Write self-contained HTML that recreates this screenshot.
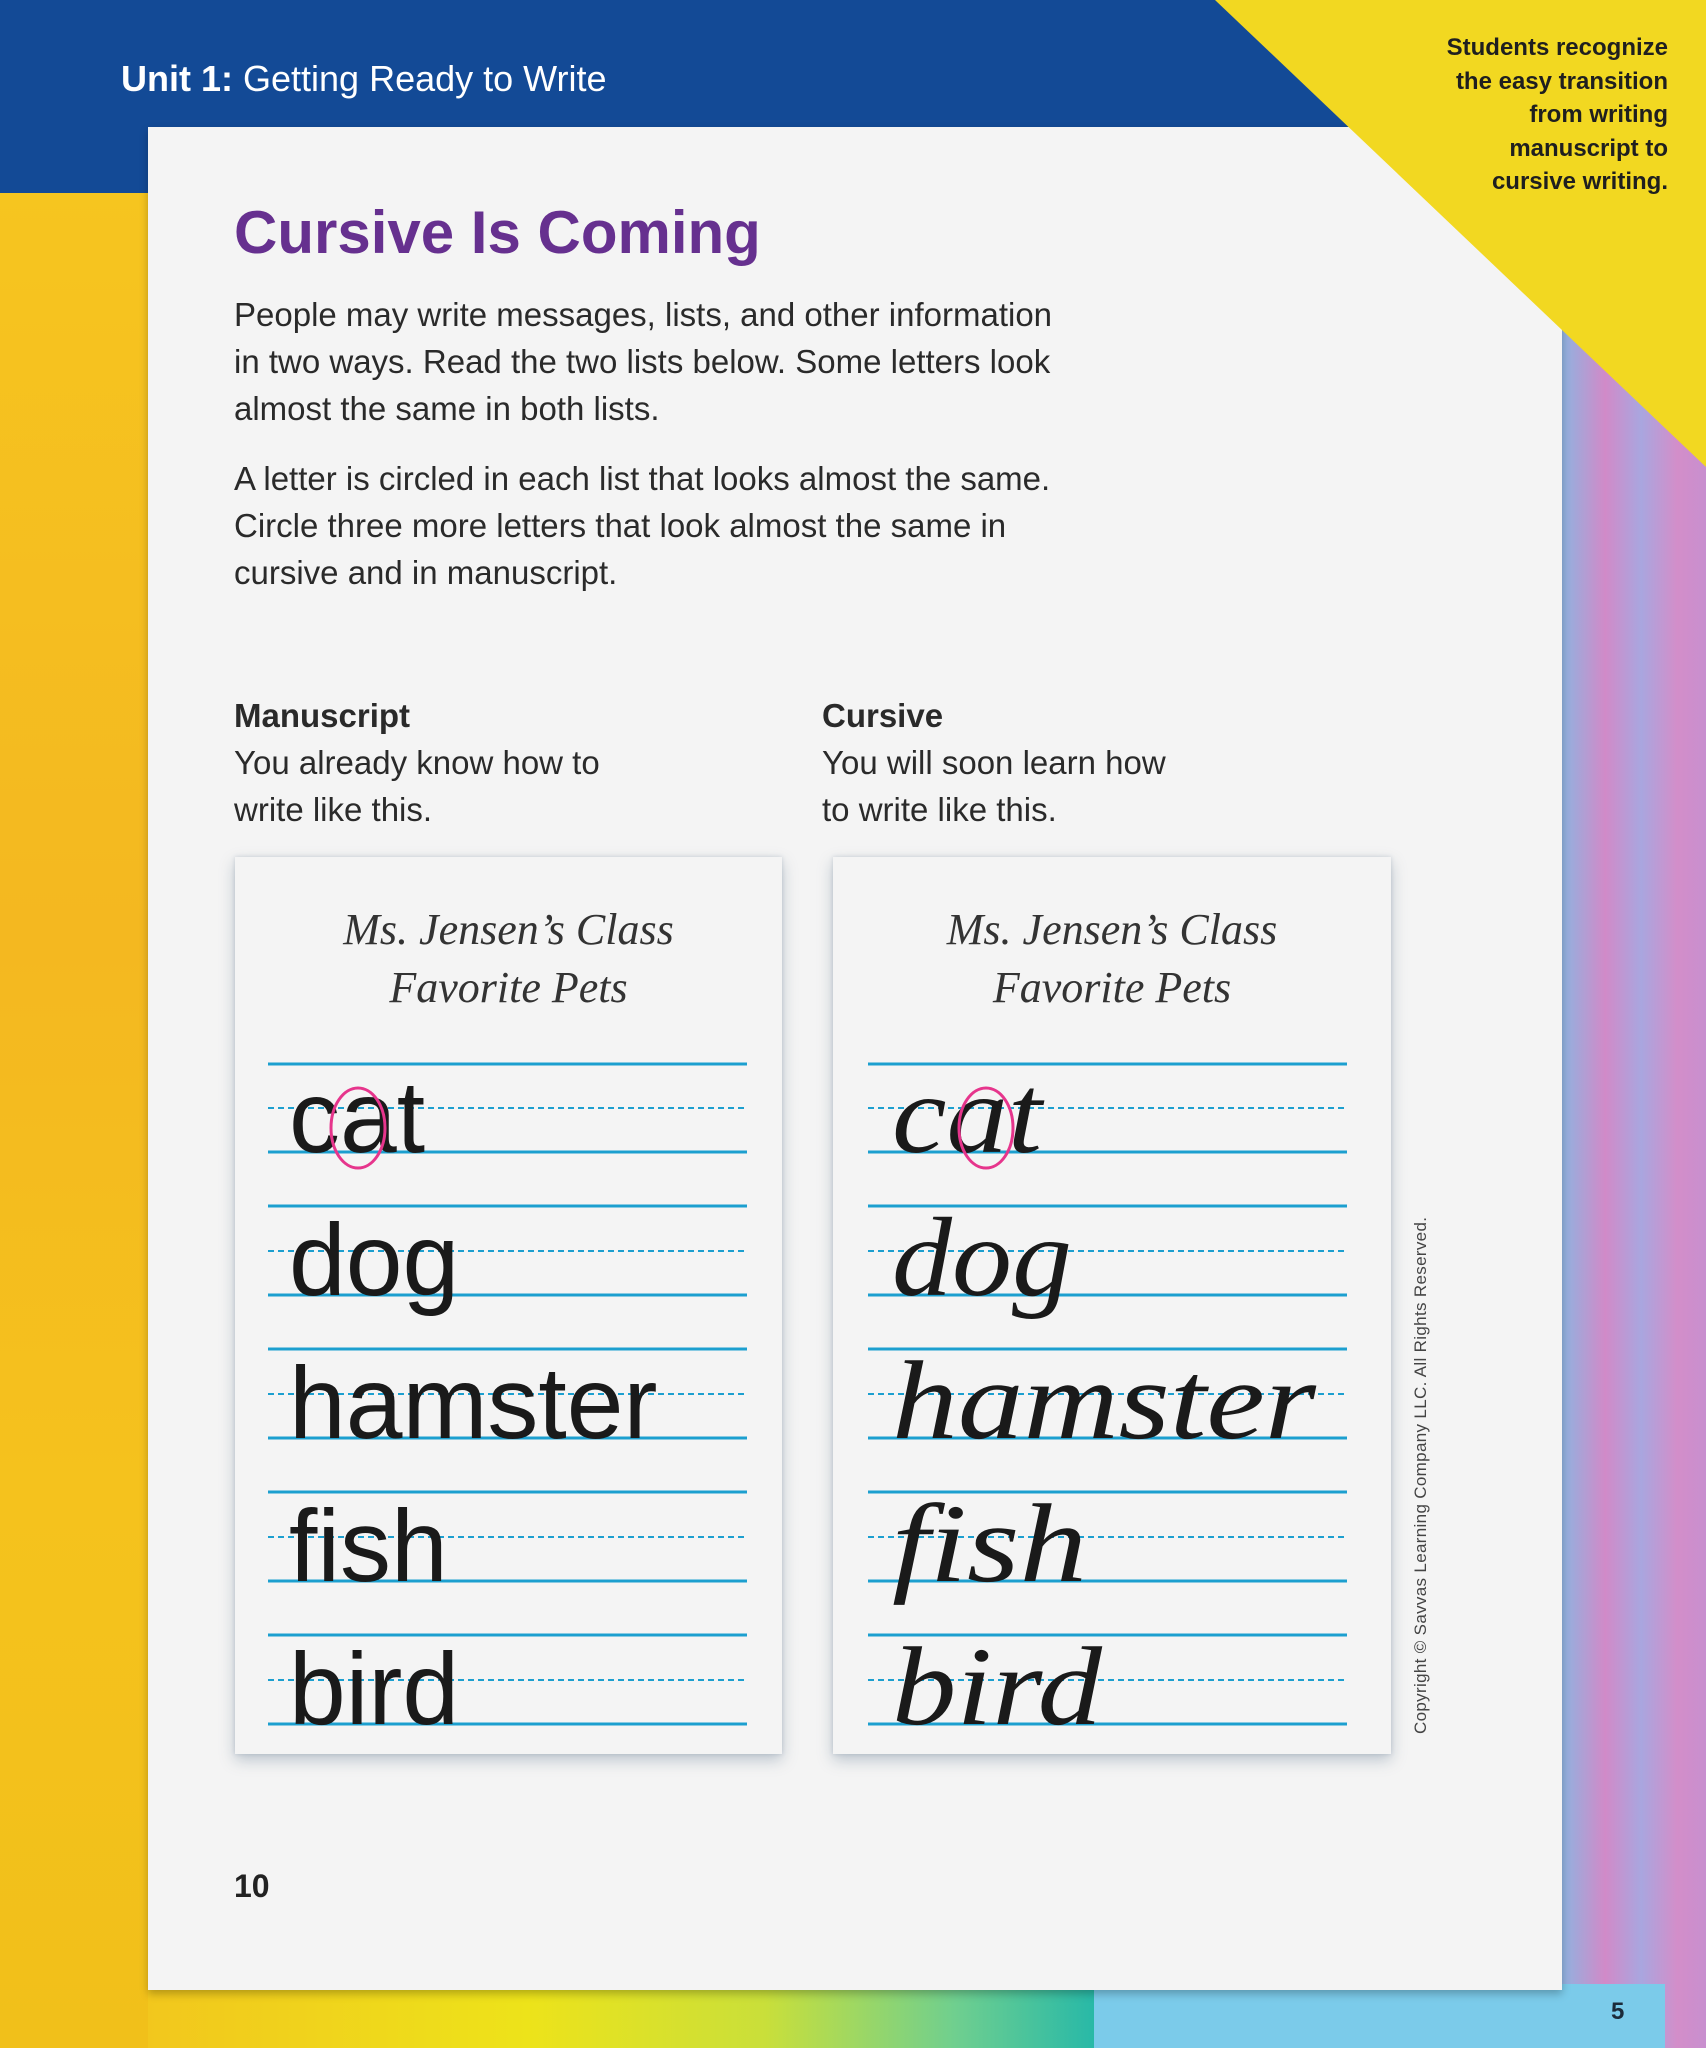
<!DOCTYPE html>
<html><head><meta charset="utf-8">
<style>
*{margin:0;padding:0;box-sizing:border-box}
body{width:1706px;height:2048px;position:relative;overflow:hidden;background:#f3c820;font-family:"Liberation Sans",sans-serif}
.abs{position:absolute}
#left{left:0;top:193px;width:148px;height:1855px;background:linear-gradient(180deg,#f6c51f 0%,#f4b820 40%,#f5c21d 70%,#f1c01a 100%)}
#right{left:1562px;top:300px;width:144px;height:1748px;background:linear-gradient(90deg,#8fb3e0 0%,#d18ac8 30%,#a9a6df 55%,#d38ec9 80%,#c88fcf 100%)}
#bottom{left:148px;top:1990px;width:950px;height:58px;background:linear-gradient(90deg,#f2c71d 0%,#ede31a 40%,#c9df3a 65%,#6fcf8f 85%,#26b8a8 100%)}
#lb{left:1094px;top:1984px;width:571px;height:64px;background:#7bcbea}
#blue{left:0;top:0;width:1706px;height:193px;background:#134a96}
#page{left:148px;top:127px;width:1414px;height:1863px;background:#f4f4f4;box-shadow:0 4px 8px rgba(0,0,0,.25)}
.t{color:#2a2a2a;font-size:33px;line-height:47px;white-space:nowrap}
.card{background:#f4f4f4;box-shadow:0 6px 14px rgba(120,140,160,.45),0 0 4px rgba(120,140,160,.3)}
.ct{position:absolute;width:100%;text-align:center;font-family:"Liberation Serif",serif;font-style:italic;font-size:44px;color:#333;line-height:58px;top:44px}
</style></head><body>
<div id="left" class="abs"></div>
<div id="right" class="abs"></div>
<div id="bottom" class="abs"></div>
<div id="lb" class="abs"></div>
<div id="blue" class="abs"></div>
<div class="abs" style="left:121px;top:58px;color:#fff;font-size:36px;white-space:nowrap"><b>Unit 1:</b> Getting Ready to Write</div>
<div id="page" class="abs"></div>
<svg class="abs" style="left:0;top:0" width="1706" height="2048"><polygon points="1215,0 1706,0 1706,467" fill="#f2d821"/></svg>
<div class="abs" style="right:38px;top:31px;text-align:right;font-size:24px;font-weight:bold;line-height:33.5px;color:#1f1f1f">Students recognize<br>the easy transition<br>from writing<br>manuscript to<br>cursive writing.</div>
<div class="abs" style="left:234px;top:198px;font-size:60px;font-weight:bold;color:#66308f">Cursive Is Coming</div>
<div class="abs t" style="left:234px;top:291px">People may write messages, lists, and other information<br>in two ways. Read the two lists below. Some letters look<br>almost the same in both lists.</div>
<div class="abs t" style="left:234px;top:455px">A letter is circled in each list that looks almost the same.<br>Circle three more letters that look almost the same in<br>cursive and in manuscript.</div>
<div class="abs t" style="left:234px;top:692px"><b>Manuscript</b><br>You already know how to<br>write like this.</div>
<div class="abs t" style="left:822px;top:692px"><b>Cursive</b><br>You will soon learn how<br>to write like this.</div>
<div class="abs card" style="left:235px;top:857px;width:547px;height:897px"><div class="ct">Ms. Jensen’s Class<br>Favorite Pets</div></div>
<div class="abs card" style="left:833px;top:857px;width:558px;height:897px"><div class="ct">Ms. Jensen’s Class<br>Favorite Pets</div></div>
<svg class="abs" style="left:0;top:0" width="1706" height="2048">
<g stroke="#1c9fcf" stroke-width="3">
<g id="rules">
<line x1="268" x2="747" y1="1064" y2="1064"/><line x1="268" x2="747" y1="1108" y2="1108" stroke-dasharray="6,4" stroke-width="2"/><line x1="268" x2="747" y1="1152" y2="1152"/>
<line x1="268" x2="747" y1="1206" y2="1206"/><line x1="268" x2="747" y1="1251" y2="1251" stroke-dasharray="6,4" stroke-width="2"/><line x1="268" x2="747" y1="1295" y2="1295"/>
<line x1="268" x2="747" y1="1349" y2="1349"/><line x1="268" x2="747" y1="1394" y2="1394" stroke-dasharray="6,4" stroke-width="2"/><line x1="268" x2="747" y1="1438" y2="1438"/>
<line x1="268" x2="747" y1="1492" y2="1492"/><line x1="268" x2="747" y1="1537" y2="1537" stroke-dasharray="6,4" stroke-width="2"/><line x1="268" x2="747" y1="1581" y2="1581"/>
<line x1="268" x2="747" y1="1635" y2="1635"/><line x1="268" x2="747" y1="1680" y2="1680" stroke-dasharray="6,4" stroke-width="2"/><line x1="268" x2="747" y1="1724" y2="1724"/>
</g>
<use href="#rules" transform="translate(600,0)"/>
</g>
<g font-size="102" fill="#1a1a1a" font-family="Liberation Sans, sans-serif">
<text x="289" y="1152">cat</text>
<text x="289" y="1295">dog</text>
<text x="289" y="1438">hamster</text>
<text x="289" y="1581">fish</text>
<text x="289" y="1724">bird</text>
</g>
<g font-family="Liberation Serif, serif" font-style="italic" font-size="112" fill="#1a1a1a">
<text x="892" y="1152" textLength="150" lengthAdjust="spacingAndGlyphs">cat</text>
<text x="892" y="1295" textLength="180" lengthAdjust="spacingAndGlyphs">dog</text>
<text x="892" y="1438" textLength="424" lengthAdjust="spacingAndGlyphs">hamster</text>
<text x="892" y="1581" textLength="195" lengthAdjust="spacingAndGlyphs">fish</text>
<text x="892" y="1724" textLength="210" lengthAdjust="spacingAndGlyphs">bird</text>
</g>
<ellipse cx="358" cy="1128" rx="27" ry="40" fill="none" stroke="#e6358c" stroke-width="3"/>
<ellipse cx="986" cy="1128" rx="27" ry="40" fill="none" stroke="#e6358c" stroke-width="3"/>
<text transform="translate(1426,1734) rotate(-90)" font-size="17" fill="#444" font-family="Liberation Sans, sans-serif" textLength="517">Copyright © Savvas Learning Company LLC. All Rights Reserved.</text>
</svg>
<div class="abs" style="left:234px;top:1868px;font-size:32px;font-weight:bold;color:#222">10</div>
<div class="abs" style="left:1611px;top:1998px;font-size:24px;font-weight:bold;color:#1c2b3a">5</div>
</body></html>
